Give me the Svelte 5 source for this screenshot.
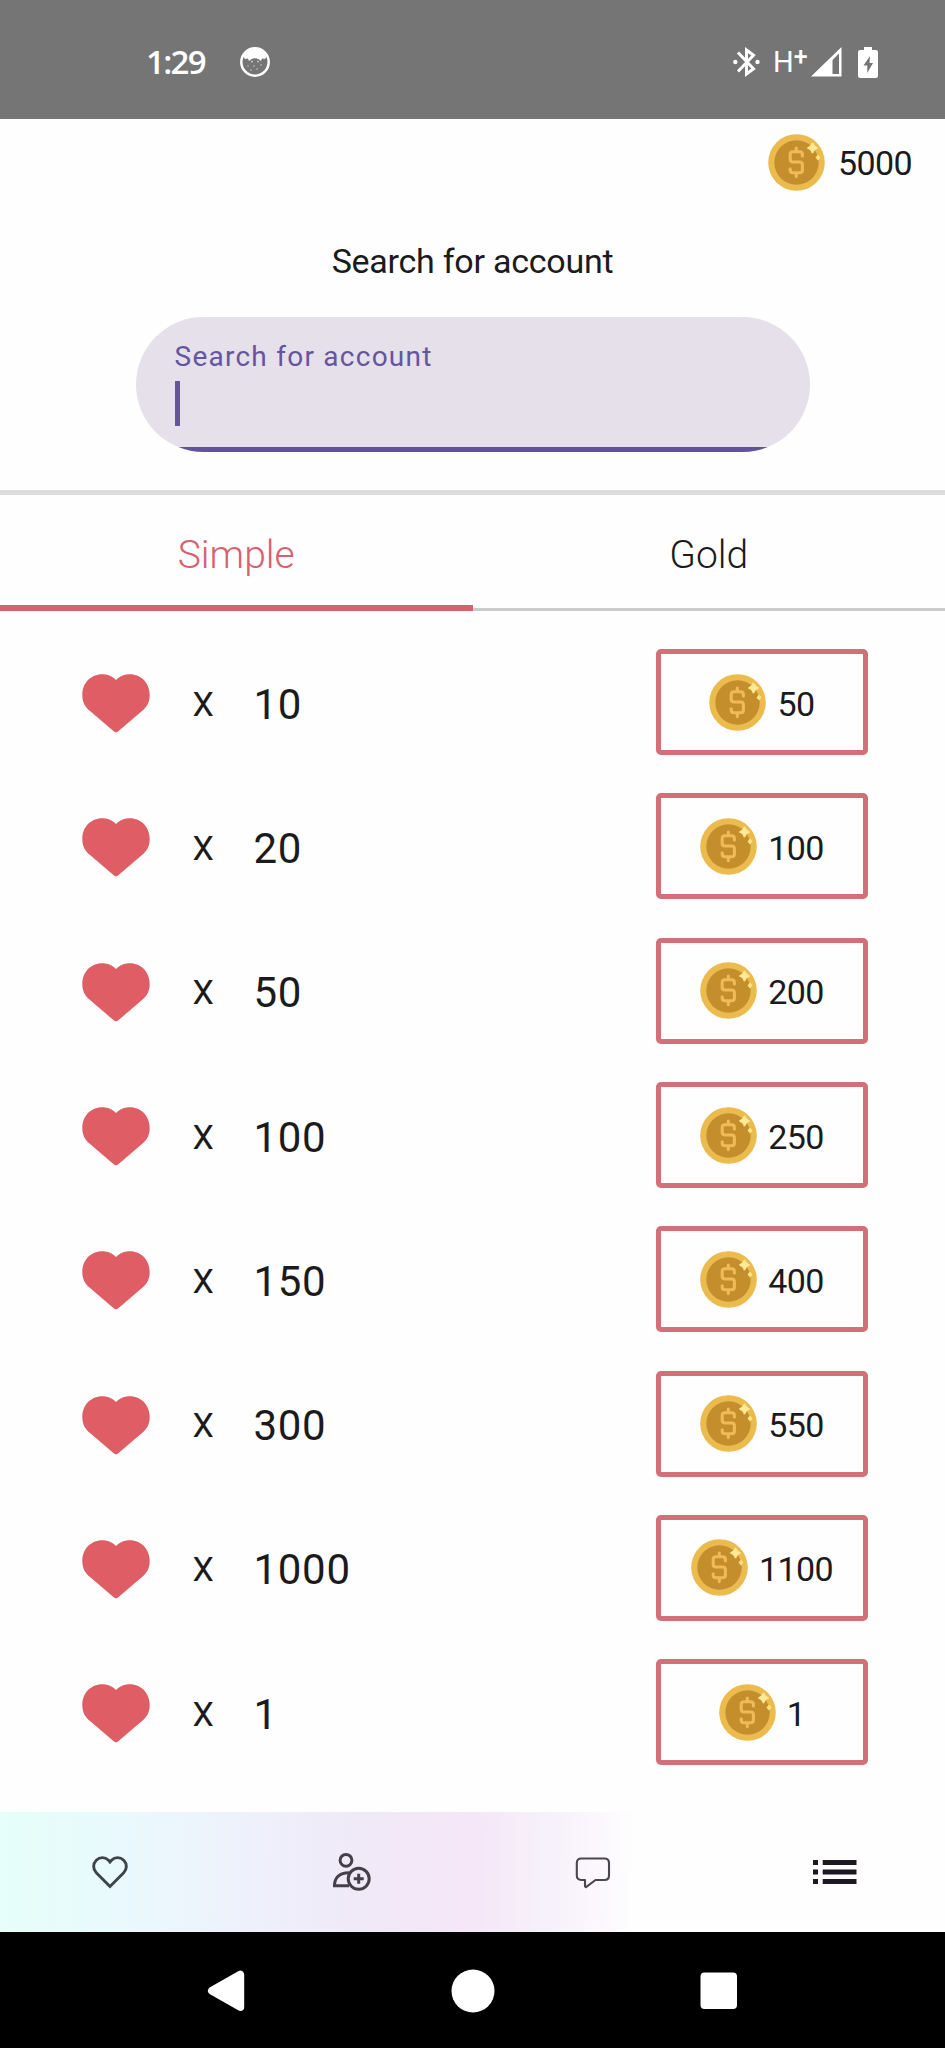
<script>
  const offers = [
    { hearts: 10, price: 50 },
    { hearts: 20, price: 100 },
    { hearts: 50, price: 200 },
    { hearts: 100, price: 250 },
    { hearts: 150, price: 400 },
    { hearts: 300, price: 550 },
    { hearts: 1000, price: 1100 },
    { hearts: 1, price: 1 }
  ];
</script>

{#snippet coin()}
  <svg class="coin" viewBox="0 0 57 57" aria-hidden="true">
    <circle cx="28.5" cy="28.5" r="28.3" fill="#ebbb4e" />
    <circle cx="28.5" cy="28.5" r="22.2" fill="#c58e2c" />
    <path d="M34.4 22V20.5Q34.4 17.7 31.6 17.7H25Q22.2 17.7 22.2 20.5V25.2Q22.2 28 25 28H31.6Q34.4 28 34.4 30.8V36Q34.4 38.8 31.6 38.8H25Q22.2 38.8 22.2 36V34.8M28.3 14V17.7M28.3 38.8V42.6" fill="none" stroke="#f0b95a" stroke-width="3.1" stroke-linecap="round" />
    <path d="M44.5 9Q45.5 13 49.5 14Q45.5 15 44.5 19Q43.5 15 39.5 14Q43.5 13 44.5 9Z" fill="#ffe995" stroke="#ffe995" stroke-width="1.6" />
    <path d="M50 20.5L52.5 23.5L50 26.5L47.5 23.5Z" fill="#ffe184" />
  </svg>
{/snippet}

<div class="screen">
  <header class="status">
    <span class="time">1:29</span>
    <svg class="face" viewBox="0 0 30 30">
      <circle cx="15" cy="15" r="13.7" fill="none" stroke="#fff" stroke-width="2.5" />
      <path d="M3 9Q6 2 15 2Q24 2 27 9L25 12L22 11.5L21 14L18.5 12Q15 10.5 11.5 12L9 14L8 11.5L5 12Z" fill="#fff" />
      <g fill="#c4c4c4"><circle cx="12" cy="14.5" r="1" /><circle cx="18" cy="14.5" r="1" /><circle cx="8" cy="19" r=".8" /><circle cx="14" cy="19" r=".8" /><circle cx="21" cy="18" r=".8" /><circle cx="11" cy="23" r=".8" /><circle cx="17" cy="22" r=".8" /></g>
    </svg>
    <div class="indicators">
      <svg width="27" height="30" viewBox="0 0 27 30">
        <path d="M5 5.5L20.5 21.7L13.5 27V3L20.5 8.3L5 24.5" fill="none" stroke="#fff" stroke-width="3" />
        <circle cx="2.3" cy="15" r="2.2" fill="#fff" /><circle cx="24.5" cy="15" r="2.2" fill="#fff" />
      </svg>
      <span class="network">H<span>+</span></span>
      <svg class="signal" width="31" height="30" viewBox="0 0 31 30">
        <path fill-rule="evenodd" d="M0 29.5L30.5 0V29.5ZM21.5 13V27H28V6.5Z" fill="#fff" />
      </svg>
      <svg class="battery" width="20" height="31" viewBox="0 0 20 31">
        <path d="M6 0H14V3H18Q20 3 20 5V29Q20 31 18 31H2Q0 31 0 29V5Q0 3 2 3H6Z" fill="#fff" />
        <path d="M12 9L5.5 18.5H9.3V26L15 16H11.5Z" fill="#757575" />
      </svg>
    </div>
  </header>

  <div class="balance">{@render coin()}<span>5000</span></div>

  <h1>Search for account</h1>
  <div class="field">
    <span class="label">Search for account</span>
    <span class="caret"></span>
  </div>

  <div class="tabs">
    <div class="tab active">Simple</div>
    <div class="tab">Gold</div>
  </div>

  <main>
    {#each offers as offer}
      <div class="row">
        <svg class="heart" width="68" height="59" viewBox="0 0 68 59">
          <path d="M34 6C29 1 24 .3 20 .3C9 .3 .3 9 .3 21C.3 28 3 33 8 37L32 57.6Q34 59.2 36 57.6L60 37C65 33 67.7 28 67.7 21C67.7 9 59 .3 48 .3C44 .3 39 1 34 6Z" fill="#df5d65" />
        </svg>
        <span class="times">X</span>
        <span class="count">{offer.hearts}</span>
        <div class="price">{@render coin()}<span>{offer.price}</span></div>
      </div>
    {/each}
  </main>

  <nav class="bottom">
    <svg viewBox="0 0 44 40">
      <path d="M22 34.5L8.3 20.8C4.8 17.3 4.8 11.7 8.3 8.2C11.8 4.7 17 4.7 20.5 8.2L22 10L23.5 8.2C27 4.7 32.2 4.7 35.7 8.2C39.2 11.7 39.2 17.3 35.7 20.8Z" fill="none" stroke="#3f434b" stroke-width="2.9" />
    </svg>
    <svg viewBox="0 0 44 40">
      <g fill="none" stroke="#453f4a" stroke-width="3">
        <circle cx="16" cy="8.3" r="5.9" />
        <path d="M19 33.8H4.5C4.5 26 9 20.7 19 20.7" />
        <circle cx="28.7" cy="26.8" r="10.5" />
        <path d="M28.7 21.8V31.8M23.7 26.8H33.7" />
      </g>
    </svg>
    <svg viewBox="0 0 44 40">
      <path d="M10.3 6.5H33.5Q38 6.5 38 11V23.5Q38 28 33.5 28H24.5L15 35.2L14 34.5V28H10.3Q5.8 28 5.8 23.5V11Q5.8 6.5 10.3 6.5Z" fill="none" stroke="#4b464d" stroke-width="2.1" stroke-linejoin="round" />
    </svg>
    <svg viewBox="0 0 44 40">
      <path d="M0 8H5V13H0ZM9.7 8H43.5V13H9.7ZM0 17.5H5V22.5H0ZM9.7 17.5H43.5V22.5H9.7ZM0 27H5V32H0ZM9.7 27H43.5V32H9.7Z" fill="#1c1822" />
    </svg>
  </nav>

  <nav class="system">
    <svg viewBox="0 0 44 44"><path d="M8 21.8L36.2 5.7V37.9Z" fill="#fff" stroke="#fff" stroke-width="8" stroke-linejoin="round" /></svg>
    <svg viewBox="0 0 44 44"><circle cx="22" cy="22" r="21.5" fill="#fff" /></svg>
    <svg viewBox="0 0 44 44"><rect x="3.5" y="3.5" width="36.5" height="36.5" rx="4" fill="#fff" /></svg>
  </nav>
</div>

<style>
  :global(body) { margin: 0; }
  .screen {
    display: flex;
    flex-direction: column;
    box-sizing: border-box;
    width: 945px;
    height: 2048px;
    overflow: hidden;
    background: #fefefe;
    color: #1b1b1d;
    font-family: Roboto, sans-serif;
  }
  svg { display: block; flex: none; }
  .status {
    box-sizing: border-box;
    display: flex;
    align-items: center;
    height: 119px;
    padding: 5px 67px 0 146px;
    background: #757575;
    color: #fff;
  }
  .time { width: 94px; font: 600 33px/40px "Open Sans", sans-serif; letter-spacing: -1.7px; }
  .face { width: 30px; height: 30px; }
  .indicators { display: flex; align-items: center; margin-left: auto; }
  .network { display: flex; width: 37px; margin-left: 13px; font-size: 29px; line-height: 30px; }
  .network span { font-size: 25px; font-weight: 500; line-height: 20px; }
  .signal { margin-left: 1px; }
  .battery { margin-left: 16px; }
  .coin { width: 57px; height: 57px; }
  .balance {
    display: flex;
    align-items: center;
    justify-content: flex-end;
    height: 87px;
    padding-right: 33px;
    gap: 13px;
    font-size: 34px;
    letter-spacing: -.6px;
  }
  h1 { margin: 35px 0 0; text-align: center; font-size: 34px; font-weight: 400; line-height: 40px; letter-spacing: -.25px; }
  .field {
    box-sizing: border-box;
    display: flex;
    flex-direction: column;
    align-self: center;
    width: 674px;
    height: 135px;
    margin-top: 36px;
    padding: 23px 39px 0;
    overflow: hidden;
    border-radius: 68px;
    background: linear-gradient(#62529d, #62529d) bottom / 100% 5px no-repeat #e5e0ea;
    color: #65559f;
  }
  .label { font-size: 28px; line-height: 34px; letter-spacing: 1.25px; }
  .caret { width: 5px; height: 45px; margin-top: 7px; background: #65559f; }
  .tabs { display: flex; height: 116px; margin-top: 38px; border-top: 5px solid #dcdcdc; }
  .tab {
    box-sizing: border-box;
    flex: 1;
    height: 116px;
    padding-top: 37px;
    border-bottom: 3px solid #cacaca;
    text-align: center;
    font-size: 39px;
    font-weight: 300;
    line-height: 46px;
  }
  .tab.active { border-bottom: 6px solid #d3626b; color: #d8606e; }
  main { height: 1182px; padding-top: 19px; }
  .row { display: flex; align-items: center; height: 144.3px; padding: 0 77px 0 81.5px; }
  .heart { margin-top: 3px; }
  .times { width: 61px; margin: 3px 0 0 43px; font-size: 34px; }
  .count { margin-top: 4px; font-size: 42px; letter-spacing: .7px; }
  .price {
    box-sizing: border-box;
    display: flex;
    align-items: center;
    justify-content: center;
    gap: 11px;
    width: 212px;
    height: 106px;
    margin-left: auto;
    border: 5px solid #d17078;
    border-radius: 5px;
    font-size: 34px;
    letter-spacing: -.6px;
  }
  .price span { margin-top: 3px; }
  .bottom {
    box-sizing: border-box;
    display: flex;
    justify-content: space-between;
    align-items: center;
    height: 120px;
    padding: 0 88px;
    background: linear-gradient(91deg, #e5fff9 0, #eaf9fd 130px, #eef0fb 260px, #f0e9f7 370px, #f5e6f8 475px, #f6f1fa 545px, #fbf7fd 595px, #fefefe 635px);
  }
  .bottom svg { width: 44px; height: 40px; }
  .system { display: flex; justify-content: space-between; padding: 37px 204px 35px; background: #000; }
  .system svg { width: 44px; height: 44px; }
</style>
